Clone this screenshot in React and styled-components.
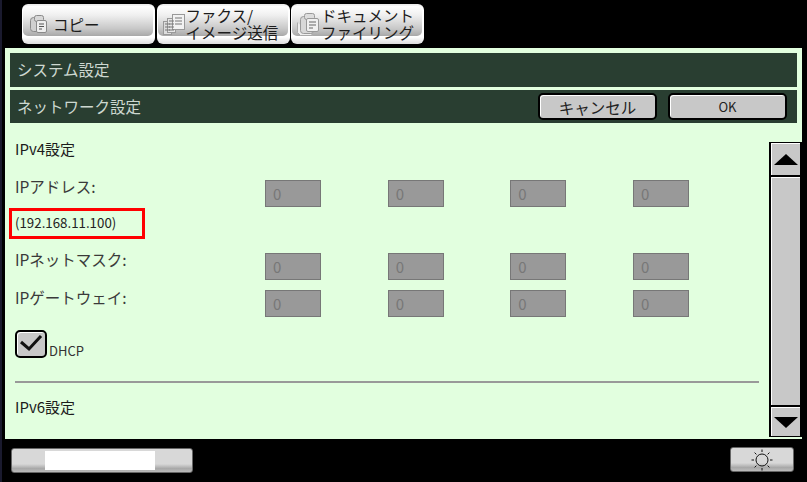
import styled, { createGlobalStyle } from 'styled-components'

const GlobalStyle = createGlobalStyle`
  html, body {
    margin: 0;
    padding: 0;
    background: #000;
  }
  body {
    font-family: "Noto Sans CJK JP", "Noto Sans", sans-serif;
    color: #333;
  }
`

const Screen = styled.div`
  width: 807px;
  height: 482px;
  overflow: hidden;
  background: #000;
  border-left: 2px solid #1a1a2e;
  box-sizing: border-box;
  display: flex;
  flex-direction: column;
`

const TabBar = styled.div`
  height: 48px;
  padding: 4px 0 0 20px;
  box-sizing: border-box;
  display: flex;
  gap: 1.5px;
`

const Tab = styled.div`
  position: relative;
  z-index: 0;
  width: 133px;
  height: 40px;
  box-sizing: border-box;
  padding-left: ${p => p.$pad}px;
  border-radius: 6px;
  background: linear-gradient(#e8e8e8, #fff 8%, #fff 82%, #ddd);
  display: flex;
  align-items: center;
  color: #1c1c1c;
  font-size: 15.5px;
  line-height: 17px;

  &::before {
    content: '';
    position: absolute;
    z-index: -1;
    top: 2px;
    left: 1px;
    right: 2px;
    height: 30px;
    border-radius: 5px;
    background: linear-gradient(#fff 0%, #f0f0f0 30%, #c8c8c8 75%, #a8a8a8 100%);
  }
`

const TabLabel = styled.span`
  white-space: nowrap;
  margin-left: ${p => p.$gap || 0}px;
`

const Panel = styled.div`
  width: 797px;
  height: 391px;
  margin-left: 3px;
  background: #e2ffdf;
  box-sizing: border-box;
  padding: 5px 0 0 5px;
  display: flex;
  flex-direction: column;
`

const Band = styled.div`
  width: 787px;
  height: ${p => p.$h}px;
  margin-bottom: ${p => p.$mb || 0}px;
  background: #293e31;
  color: #cdd8d0;
  font-size: 15.5px;
  box-sizing: border-box;
  padding: 0 0 2px 7px;
  display: flex;
  align-items: center;
`

const BandTitle = styled.span`
  flex: 1;
`

const BandButton = styled.button`
  width: 119px;
  height: 27px;
  margin: 2px ${p => p.$mr}px 0 0;
  padding: 0;
  background: #c8c8c8;
  border: 2px solid #000;
  border-radius: 5px;
  box-shadow: inset 1px 1px 0 #fff;
  color: #222;
  font-family: inherit;
  font-size: ${p => (p.$small ? '13px' : '15.5px')};
`

const Body = styled.div`
  flex: 1;
  display: flex;
  min-height: 0;
`

const Form = styled.div`
  flex: none;
  width: 759px;
  padding-top: 16px;
  box-sizing: border-box;
  display: flex;
  flex-direction: column;
`

const Heading = styled.div`
  height: 20px;
  line-height: 20px;
  margin-left: 5px;
  font-size: 15px;
  color: #1c1c1c;
  margin-bottom: ${p => p.$mb || 0}px;
`

const FieldRow = styled.div`
  height: 27px;
  margin-bottom: ${p => p.$mb || 0}px;
  display: flex;
  align-items: center;
`

const FieldLabel = styled.div`
  width: 250px;
  margin-left: 5px;
  margin-top: ${p => p.$mt || 0}px;
  font-size: 15.5px;
  color: #3a3a3a;
  white-space: nowrap;
`

const Octets = styled.div`
  display: flex;
  gap: 66.67px;
`

const Octet = styled.div`
  width: 56px;
  height: 27px;
  box-sizing: border-box;
  padding-left: 7px;
  background: #999;
  border: 1px solid #777;
  color: #777;
  font-size: 15px;
  line-height: 25px;
`

const AddressNote = styled.div`
  width: 136px;
  height: 31px;
  margin: 1px 0 14px -1px;
  box-sizing: border-box;
  border: 3px solid #f00;
  padding-left: 3px;
  font-size: 13.3px;
  line-height: 24px;
  color: #222;
`

const CheckRow = styled.div`
  display: flex;
  align-items: flex-end;
  margin: 13px 0 0 5px;
`

const CheckBox = styled.div`
  width: 32px;
  height: 28px;
  box-sizing: border-box;
  background: #c8c8c8;
  border: 2px solid #000;
  border-radius: 5px;
  box-shadow: inset 1px 1px 0 #fff;
  display: flex;
  align-items: center;
  justify-content: center;
`

const CheckLabel = styled.span`
  margin-left: 2px;
  font-size: 13px;
  line-height: 15px;
  color: #333;
`

const Rule = styled.div`
  width: 744px;
  height: 2px;
  margin: 23px 0 14px 5px;
  background: #999;
`

const ScrollBar = styled.div`
  flex: none;
  width: 33px;
  height: 295px;
  margin-top: 19px;
  background: #000;
  padding: 1px 2px;
  box-sizing: border-box;
  display: flex;
  flex-direction: column;
  gap: 2px;
`

const ScrollButton = styled.div`
  height: ${p => p.$h}px;
  flex: ${p => (p.$thumb ? '1' : 'none')};
  background: #c8c8c8;
  border-top: 1px solid #fff;
  border-left: 1px solid #fff;
  box-sizing: border-box;
  display: flex;
  align-items: center;
  justify-content: center;
`

const Arrow = styled.div`
  width: 0;
  height: 0;
  border-left: 12px solid transparent;
  border-right: 12px solid transparent;
  ${p => (p.$up ? 'border-bottom: 11px solid #000;' : 'border-top: 11px solid #000;')}
`

const BottomBar = styled.div`
  flex: 1;
  display: flex;
  justify-content: space-between;
  padding: 9px 13px 0 9px;
  box-sizing: border-box;
`

const BottomButton = styled.div`
  width: ${p => p.$w}px;
  height: 25px;
  margin-top: ${p => p.$mt || 0}px;
  box-sizing: border-box;
  border: 1px solid #666;
  border-radius: 3px;
  background: linear-gradient(#d8d8d8 0%, #d8d8d8 65%, #a8a8a8 85%, #bbb 100%);
  display: flex;
  align-items: center;
  justify-content: center;
`

const BlankPatch = styled.div`
  width: 110px;
  height: 19px;
  margin-left: -4px;
  background: #fff;
`

const CopyIcon = () => (
  <svg width="19" height="20" viewBox="0 0 19 20" fill="none" stroke="#8a8a8a">
    <rect x="1.5" y="3.5" width="10" height="14" rx="3" fill="#d0d0d0" />
    <rect x="5.5" y="1.5" width="9" height="6" rx="2" fill="#d8d8d8" />
    <rect x="7.5" y="6.5" width="10" height="12" rx="1.5" fill="#eee" />
    <path d="M10 10h5M10 12.5h5M10 15h3" stroke="#555" />
  </svg>
)

const FaxIcon = () => (
  <svg width="24" height="25" viewBox="0 0 24 25" fill="none" stroke="#999">
    <rect x="1.5" y="9.5" width="8" height="13" fill="#ddd" />
    <rect x="5.5" y="6.5" width="8" height="14" fill="#e6e6e6" />
    <rect x="10.5" y="2.5" width="12" height="15" fill="#f2f2f2" />
    <path d="M3 12h5M3 15h5M3 18h5M7 9h5M7 12h5M7 15h5M7 18h5M13 6h7M13 9h7M13 12h7" stroke="#777" />
  </svg>
)

const DocumentIcon = () => (
  <svg width="25" height="26" viewBox="0 0 25 26" fill="none" stroke="#999">
    <path d="M1.5 11.5v10l3 3h12" stroke="#aaa" fill="#eee" />
    <rect x="4.5" y="5.5" width="13" height="17" rx="3" fill="#d8d8d8" />
    <rect x="8.5" y="2.5" width="10" height="6" rx="2" fill="#ddd" />
    <rect x="10.5" y="7.5" width="12" height="13" rx="1.5" fill="#f0f0f0" />
    <path d="M13 11h7M13 14h7M13 17h4" stroke="#666" />
  </svg>
)

const CheckMark = () => (
  <svg width="24" height="18" viewBox="0 0 24 18" fill="none">
    <path d="M2 7l8 7L22 1" stroke="#111" strokeWidth="3" />
  </svg>
)

const SunIcon = () => (
  <svg width="22" height="22" viewBox="0 0 22 22" fill="none" stroke="#111">
    <circle cx="11" cy="11" r="6" />
    <path d="M11 0.5v2.5M11 19v2.5M0.5 11H3M19 11h2.5M3.6 3.6l1.8 1.8M16.6 16.6l1.8 1.8M3.6 18.4l1.8-1.8M16.6 5.4l1.8-1.8" />
  </svg>
)

const octets = [0, 1, 2, 3]

const OctetGroup = () => (
  <Octets>
    {octets.map(i => (
      <Octet key={i}>0</Octet>
    ))}
  </Octets>
)

export default function App() {
  return (
    <Screen>
      <GlobalStyle />
      <TabBar>
        <Tab $pad={7}>
          <CopyIcon />
          <TabLabel $gap={5}>コピー</TabLabel>
        </Tab>
        <Tab $pad={5}>
          <FaxIcon />
          <TabLabel>
            ファクス/
            <br />
            イメージ送信
          </TabLabel>
        </Tab>
        <Tab $pad={5}>
          <DocumentIcon />
          <TabLabel>
            ドキュメント
            <br />
            ファイリング
          </TabLabel>
        </Tab>
      </TabBar>
      <Panel>
        <Band $h={34} $mb={3}>
          <BandTitle>システム設定</BandTitle>
        </Band>
        <Band $h={33}>
          <BandTitle>ネットワーク設定</BandTitle>
          <BandButton $mr={11}>キャンセル</BandButton>
          <BandButton $mr={10} $small>
            OK
          </BandButton>
        </Band>
        <Body>
          <Form>
            <Heading $mb={21}>IPv4設定</Heading>
            <FieldRow>
              <FieldLabel $mt={-15}>IPアドレス:</FieldLabel>
              <OctetGroup />
            </FieldRow>
            <AddressNote>(192.168.11.100)</AddressNote>
            <FieldRow $mb={10}>
              <FieldLabel $mt={-15}>IPネットマスク:</FieldLabel>
              <OctetGroup />
            </FieldRow>
            <FieldRow>
              <FieldLabel $mt={-14}>IPゲートウェイ:</FieldLabel>
              <OctetGroup />
            </FieldRow>
            <CheckRow>
              <CheckBox>
                <CheckMark />
              </CheckBox>
              <CheckLabel>DHCP</CheckLabel>
            </CheckRow>
            <Rule />
            <Heading>IPv6設定</Heading>
          </Form>
          <ScrollBar>
            <ScrollButton $h={32}>
              <Arrow $up />
            </ScrollButton>
            <ScrollButton $thumb />
            <ScrollButton $h={29}>
              <Arrow />
            </ScrollButton>
          </ScrollBar>
        </Body>
      </Panel>
      <BottomBar>
        <BottomButton $w={182}>
          <BlankPatch />
        </BottomButton>
        <BottomButton $w={64} $mt={-1}>
          <SunIcon />
        </BottomButton>
      </BottomBar>
    </Screen>
  )
}
